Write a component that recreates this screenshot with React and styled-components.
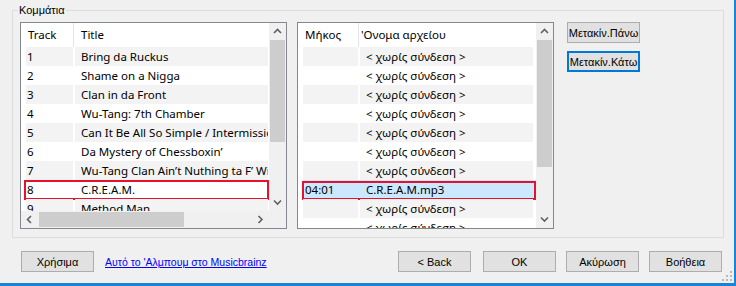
import styled, { createGlobalStyle } from 'styled-components';

const GlobalStyle = createGlobalStyle`
  html, body { margin: 0; padding: 0; background: #f0f0f0; }
  body { font-family: "Noto Sans", "Liberation Sans", sans-serif; }
`;

const Window = styled.div`
  position: relative;
  box-sizing: border-box;
  width: 736px;
  height: 286px;
  background: #f0f0f0;
  border-right: 2px solid #1883d7;
  border-bottom: 3px solid #1883d7;
  display: flex;
  flex-direction: column;
`;

const Group = styled.fieldset`
  box-sizing: border-box;
  margin: 3px 0 0 12px;
  width: 712px;
  min-width: 0;
  padding: 5px 7px 8px 7px;
  border: 1px solid #dcdcdc;
`;

const Legend = styled.legend`
  margin-left: -2px;
  padding: 0 1px;
  font: 11px/14px "Liberation Sans", sans-serif;
  color: #000;
`;

const Body = styled.div`
  display: flex;
  align-items: flex-start;
`;

const ListView = styled.div`
  box-sizing: border-box;
  width: ${p => p.$w}px;
  height: 207px;
  margin-right: ${p => p.$gap}px;
  border: 1px solid #828790;
  background: #fff;
  display: grid;
  grid-template-columns: 1fr 17px;
  grid-template-rows: ${p => (p.$hscroll ? '1fr 17px' : '1fr')};
  overflow: hidden;
`;

const Viewport = styled.div`
  overflow: hidden;
  padding-left: 5px;
  font-size: 11.5px;
  color: #000;
`;

const Header = styled.div`
  display: grid;
  grid-template-columns: ${p => p.$cols};
  column-gap: 2px;
  height: 24px;
  align-items: center;
`;

const HeadCell = styled.div`
  padding-left: ${p => p.$pad}px;
  white-space: nowrap;
  height: 24px;
  line-height: 24px;
  box-shadow: ${p => (p.$sep ? '1px 0 0 #e5e5e5' : 'none')};
`;

const Row = styled.div`
  position: relative;
  display: grid;
  grid-template-columns: ${p => p.$cols};
  column-gap: 2px;
  height: 19px;
  line-height: 19px;
  background: ${p => (p.$selected ? '#cce8ff' : 'transparent')};

  &::after {
    content: '';
    display: ${p => (p.$mark ? 'block' : 'none')};
    position: absolute;
    box-sizing: border-box;
    left: ${p => p.$mark?.[0]}px;
    right: ${p => p.$mark?.[1]}px;
    top: ${p => p.$mark?.[2]}px;
    bottom: ${p => p.$mark?.[3]}px;
    border: 2px solid #e8112d;
  }
`;

const Cell = styled.div`
  padding-left: ${p => p.$pad}px;
  white-space: nowrap;
  overflow: hidden;
  background: ${p => (p.$zebra ? '#f3f3f3' : 'transparent')};
`;

const VScroll = styled.div`
  background: #f0f0f0;
  display: flex;
  flex-direction: column;
`;

const HScroll = styled.div`
  background: #f0f0f0;
  display: flex;
`;

const Corner = styled.div`
  background: #f0f0f0;
`;

const Arrow = styled.div`
  flex: none;
  width: 17px;
  height: 17px;
  display: flex;
  align-items: center;
  justify-content: center;
`;

const VThumb = styled.div`
  flex: none;
  margin: 0 1px;
  height: ${p => p.$size}px;
  background: #cdcdcd;
`;

const HThumb = styled.div`
  flex: none;
  margin: 1px 0 1px 1px;
  width: ${p => p.$size}px;
  background: #cdcdcd;
`;

const Track = styled.div`
  flex: 1;
`;

const SideButtons = styled.div`
  display: flex;
  flex-direction: column;
  gap: 8px;
`;

const Button = styled.button`
  box-sizing: border-box;
  width: 73px;
  height: 21px;
  margin: 0 ${p => p.$mr || 0}px 0 0;
  padding: 0;
  background: #e1e1e1;
  border: ${p => (p.$focus ? '2px solid #0078d7' : '1px solid #adadad')};
  font: 11px "Liberation Sans", sans-serif;
  color: #000;
  text-align: center;
  white-space: nowrap;
  overflow: visible;
`;

const Footer = styled.div`
  display: flex;
  align-items: center;
  margin-top: 13px;
  padding: 0 12px 0 21px;
`;

const Link = styled.a`
  margin-left: 11px;
  font: 10.5px "Liberation Sans", sans-serif;
  color: #0000ff;
  text-decoration: underline;
  cursor: pointer;
`;

const Spacer = styled.div`
  flex: 1;
`;

const Grip = styled.svg`
  position: absolute;
  right: 1px;
  bottom: 1px;
`;

const Chevron = ({ dir }) => {
  const pts = {
    up: '1,5 4.5,1.5 8,5',
    down: '1,1.5 4.5,5 8,1.5',
    left: '5,1 1.5,4.5 5,8',
    right: '1.5,1 5,4.5 1.5,8',
  }[dir];
  const vertical = dir === 'up' || dir === 'down';
  return (
    <svg width={vertical ? 9 : 7} height={vertical ? 7 : 9}>
      <polyline points={pts} fill="none" stroke="#606060" strokeWidth="1.6" />
    </svg>
  );
};

const tracks = [
  ['1', 'Bring da Ruckus'],
  ['2', 'Shame on a Nigga'],
  ['3', 'Clan in da Front'],
  ['4', 'Wu-Tang: 7th Chamber'],
  ['5', 'Can It Be All So Simple / Intermission'],
  ['6', 'Da Mystery of Chessboxin’'],
  ['7', 'Wu-Tang Clan Ain’t Nuthing ta F’ Wit'],
  ['8', 'C.R.E.A.M.'],
  ['9', 'Method Man'],
  ['10', 'Protect Ya Neck'],
];

const noLink = '< χωρίς σύνδεση >';
const files = [
  ['', noLink], ['', noLink], ['', noLink], ['', noLink], ['', noLink],
  ['', noLink], ['', noLink], ['04:01', 'C.R.E.A.M.mp3'], ['', noLink], ['', noLink],
];

const leftCols = '47px 193px';
const rightCols = '55px 173px';

const App = () => {
  return (
    <>
      <GlobalStyle />
      <Window>
        <Group>
          <Legend>Κομμάτια</Legend>
          <Body>
            <ListView $w={267} $gap={10} $hscroll>
              <Viewport>
                <Header $cols={leftCols}>
                  <HeadCell $pad={2} $sep>Track</HeadCell>
                  <HeadCell $pad={6}>Title</HeadCell>
                </Header>
                {tracks.map(([n, t], i) => (
                  <Row key={n} $cols={leftCols} $mark={i === 7 ? [-2, 0, 0, -1] : null}>
                    <Cell $pad={1} $zebra={i % 2 === 0}>{n}</Cell>
                    <Cell $pad={6} $zebra={i % 2 === 0}>{t}</Cell>
                  </Row>
                ))}
              </Viewport>
              <VScroll>
                <Arrow><Chevron dir="up" /></Arrow>
                <VThumb $size={102} />
                <Track />
                <Arrow><Chevron dir="down" /></Arrow>
              </VScroll>
              <HScroll>
                <Arrow><Chevron dir="left" /></Arrow>
                <HThumb $size={145} />
                <Track />
                <Arrow><Chevron dir="right" /></Arrow>
              </HScroll>
              <Corner />
            </ListView>

            <ListView $w={257} $gap={13}>
              <Viewport>
                <Header $cols={rightCols}>
                  <HeadCell $pad={2} $sep>Μήκος</HeadCell>
                  <HeadCell $pad={1}>'Ονομα αρχείου</HeadCell>
                </Header>
                {files.map(([len, name], i) => {
                  const selected = i === 7;
                  return (
                    <Row key={i} $cols={rightCols} $selected={selected} $mark={selected ? [-1, 0, 1, -1] : null}>
                      <Cell $pad={2} $zebra={!selected && i % 2 === 0}>{len}</Cell>
                      <Cell $pad={6} $zebra={!selected && i % 2 === 0}>{name}</Cell>
                    </Row>
                  );
                })}
              </Viewport>
              <VScroll>
                <Arrow><Chevron dir="up" /></Arrow>
                <VThumb $size={127} />
                <Track />
                <Arrow><Chevron dir="down" /></Arrow>
              </VScroll>
            </ListView>

            <SideButtons>
              <Button>Μετακίν.Πάνω</Button>
              <Button $focus>Μετακίν.Κάτω</Button>
            </SideButtons>
          </Body>
        </Group>

        <Footer>
          <Button>Χρήσιμα</Button>
          <Link>Αυτό το 'Αλμπουμ στο Musicbrainz</Link>
          <Spacer />
          <Button $mr={12}>&lt; Back</Button>
          <Button $mr={10}>OK</Button>
          <Button $mr={10}>Ακύρωση</Button>
          <Button>Βοήθεια</Button>
        </Footer>

        <Grip width="11" height="11">
          {[[8, 0], [4, 4], [8, 4], [0, 8], [4, 8], [8, 8]].map(([x, y]) => (
            <rect key={`${x}-${y}`} x={x} y={y} width="2" height="2" fill="#b9b9b9" />
          ))}
        </Grip>
      </Window>
    </>
  );
};

export default App;
